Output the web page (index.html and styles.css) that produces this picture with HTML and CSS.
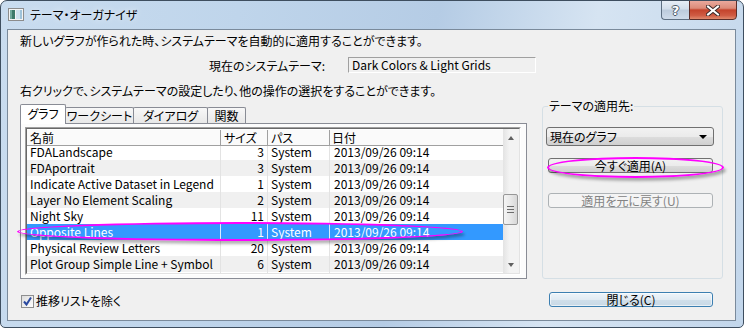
FILE: index.html
```html
<!DOCTYPE html>
<html lang="ja">
  <head>
    <meta charset="UTF-8" />
    <title>テーマ・オーガナイザ</title>
    <link rel="stylesheet" href="styles.css">
  </head>
  <body>
    <div class="window">
      <div class="titlebar">
        <svg class="app-icon" width="16" height="16" viewBox="0 0 16 16">
          <rect x="0.5" y="2.5" width="15" height="12" fill="#f4f4f4" stroke="#8c8c8c" />
          <rect x="2" y="4" width="5" height="9" fill="#3d7a6a" />
          <rect x="2" y="4" width="2" height="9" fill="#6fa89a" />
          <rect x="8" y="4" width="6" height="9" fill="#cfe2ee" />
          <rect x="12" y="4" width="2" height="9" fill="#9fc3da" />
        </svg>
        <span class="title">テーマ・オーガナイザ</span>
        <div class="caption-buttons">
          <div class="cap-btn help"><span>?</span></div>
          <div class="cap-btn close">
            <svg width="14" height="11" viewBox="0 0 14 11">
              <path d="M2 1.5 L12 9.5 M12 1.5 L2 9.5" stroke="#3b2a2a" stroke-width="4" stroke-linecap="square" />
              <path d="M2 1.5 L12 9.5 M12 1.5 L2 9.5" stroke="#fff" stroke-width="2" stroke-linecap="square" />
            </svg>
          </div>
        </div>
      </div>

      <div class="client">
        <p class="intro">新しいグラフが作られた時、システムテーマを自動的に適用することができます。</p>
        <div class="current-theme">
          <label>現在のシステムテーマ:</label>
          <div class="readonly-box">Dark Colors &amp; Light Grids</div>
        </div>
        <p class="hint">右クリックで、システムテーマの設定したり、他の操作の選択をすることができます。</p>

        <div class="main">
          <div class="tab-control">
            <div class="tabs">
              <div class="tab active" style="width: 46px;">グラフ</div>
              <div class="tab" style="width: 69px;">ワークシート</div>
              <div class="tab" style="width: 75px;">ダイアログ</div>
              <div class="tab" style="width: 39px;">関数</div>
            </div>
            <div class="tab-page">
              <div class="listview">
                <div class="list-inner">
                  <div class="list-main">
                    <div class="list-header">
                      <span class="c-name">名前</span>
                      <span class="c-size">サイズ</span>
                      <span class="c-path">パス</span>
                      <span class="c-date">日付</span>
                    </div>
                    <div class="list-body">
                      <div class="row"><span class="c-name">FDALandscape</span><span class="c-size">3</span><span class="c-path">System</span><span class="c-date">2013/09/26 09:14</span></div>
                      <div class="row"><span class="c-name">FDAportrait</span><span class="c-size">3</span><span class="c-path">System</span><span class="c-date">2013/09/26 09:14</span></div>
                      <div class="row"><span class="c-name">Indicate Active Dataset in Legend</span><span class="c-size">1</span><span class="c-path">System</span><span class="c-date">2013/09/26 09:14</span></div>
                      <div class="row"><span class="c-name">Layer No Element Scaling</span><span class="c-size">2</span><span class="c-path">System</span><span class="c-date">2013/09/26 09:14</span></div>
                      <div class="row"><span class="c-name">Night Sky</span><span class="c-size">11</span><span class="c-path">System</span><span class="c-date">2013/09/26 09:14</span></div>
                      <div class="row selected"><span class="c-name">Opposite Lines</span><span class="c-size">1</span><span class="c-path">System</span><span class="c-date">2013/09/26 09:14</span></div>
                      <div class="row"><span class="c-name">Physical Review Letters</span><span class="c-size">20</span><span class="c-path">System</span><span class="c-date">2013/09/26 09:14</span></div>
                      <div class="row"><span class="c-name">Plot Group Simple Line + Symbol</span><span class="c-size">6</span><span class="c-path">System</span><span class="c-date">2013/09/26 09:14</span></div>
                      <div class="row"><span class="c-name">Plot Group Simple Bar</span><span class="c-size">5</span><span class="c-path">System</span><span class="c-date">2013/09/26 09:14</span></div>
                    </div>
                  </div>
                  <div class="scrollbar">
                    <div class="sb-btn"><span class="arrow-up"></span></div>
                    <div class="sb-track">
                      <div class="sb-thumb"><span></span><span></span><span></span></div>
                    </div>
                    <div class="sb-btn"><span class="arrow-down"></span></div>
                  </div>
                </div>
              </div>
            </div>
          </div>

          <fieldset class="apply-group">
            <legend>テーマの適用先:</legend>
            <div class="combo">現在のグラフ<span class="combo-arrow"></span></div>
            <button class="btn apply-now">今すぐ適用(A)</button>
            <button class="btn revert" disabled>適用を元に戻す(U)</button>
          </fieldset>
        </div>

        <div class="footer">
          <label class="check">
            <span class="box">
              <svg width="11" height="11" viewBox="0 0 11 11">
                <path d="M2 5.5 L4.5 8.5 L9 1.5" fill="none" stroke="#2b4aa0" stroke-width="2" />
              </svg>
            </span>
            推移リストを除く
          </label>
          <button class="btn default">閉じる(C)</button>
        </div>
      </div>

      <div class="mark mark-row"></div>
      <div class="mark mark-apply"></div>
    </div>
  </body>
</html>
```

FILE: styles.css
```css
* {
  box-sizing: border-box;
}

html,
body {
  margin: 0;
  padding: 0;
  background: #fff;
}

body {
  font-family: "Noto Sans CJK JP", sans-serif;
  font-size: 12px;
  color: #000;
  font-feature-settings: "palt";
}

p {
  margin: 0;
}

.window {
  position: relative;
  width: 744px;
  height: 328px;
  border: 1px solid #3e4e5f;
  border-radius: 7px 7px 5px 5px;
  overflow: hidden;
  background: linear-gradient(100deg, #c9dcef 0%, #bfd5eb 30%, #b5cce5 55%, #d6e4f2 75%, #c2d6eb 100%);
}

/* title bar */
.titlebar {
  display: flex;
  align-items: flex-start;
  height: 28px;
}

.app-icon {
  margin: 5px 0 0 7px;
}

.title {
  margin: 6px 0 0 6px;
  line-height: 16px;
  text-shadow: 0 0 6px rgba(255, 255, 255, 0.9);
}

.caption-buttons {
  display: flex;
  margin: -1px 6px 0 auto;
}

.cap-btn {
  height: 20px;
  display: flex;
  align-items: center;
  justify-content: center;
}

.help {
  width: 28px;
  border: 1px solid #5d6f81;
  border-right: none;
  border-radius: 0 0 0 4px;
  background: linear-gradient(#e6eef6, #d2deeb 45%, #bccbdc 50%, #cfdcea 100%);
}

.help span {
  font-family: "DejaVu Sans", sans-serif;
  font-weight: bold;
  font-size: 13px;
  color: #fff;
  text-shadow: 1px 0 0 #4b5a6a, -1px 0 0 #4b5a6a, 0 1px 0 #4b5a6a, 0 -1px 0 #4b5a6a;
}

.close {
  width: 48px;
  border: 1px solid #5a2e2a;
  border-radius: 0 0 4px 0;
  background: linear-gradient(#eaa99d, #dc8b79 40%, #c4432c 50%, #cf5b43 80%, #e08a6e 100%);
}

/* client area */
.client {
  height: 292px;
  margin: 0 7px 0 6px;
  border: 1px solid #7a8a9b;
  background: #f0f0f0;
}

.intro {
  margin: 4px 0 0 12px;
  line-height: 14px;
}

.current-theme {
  display: flex;
  align-items: center;
  height: 16px;
  margin-top: 9px;
}

.current-theme label {
  width: 317px;
  text-align: right;
}

.readonly-box {
  width: 188px;
  height: 16px;
  margin-left: 23px;
  padding-left: 3px;
  border: 1px solid;
  border-color: #a0a0a0 #fff #fff #a0a0a0;
  line-height: 14px;
}

.hint {
  margin: 11px 0 0 12px;
  line-height: 14px;
}

.main {
  display: flex;
  height: 175px;
  margin-top: 6px;
}

/* tabs */
.tab-control {
  display: flex;
  flex-direction: column;
  width: 507px;
  margin-left: 12px;
}

.tabs {
  position: relative;
  z-index: 1;
  display: flex;
  align-items: flex-end;
  height: 19px;
}

.tab {
  height: 16px;
  margin-left: -1px;
  border: 1px solid #898c95;
  border-bottom: none;
  border-radius: 2px 2px 0 0;
  background: linear-gradient(#f8f8f8, #e8e8e8);
  text-align: center;
  line-height: 15px;
}

.tab.active {
  position: relative;
  z-index: 2;
  height: 20px;
  margin-left: 0;
  margin-bottom: -1px;
  background: #fff;
  line-height: 17px;
}

.tab-page {
  flex: 1;
  padding: 3px 5px 3px 4px;
  border: 1px solid #898c95;
  background: #fcfcfc;
}

/* list view */
.listview {
  height: 148px;
  border: 1px solid;
  border-color: #a0a0a0 #fff #fff #a0a0a0;
}

.list-inner {
  display: flex;
  height: 100%;
  border: 1px solid;
  border-color: #696969 #e3e3e3 #e3e3e3 #696969;
  background: #fff;
}

.list-main {
  flex: 1;
  display: flex;
  flex-direction: column;
  overflow: hidden;
}

.list-header {
  display: flex;
  height: 17px;
  line-height: 15px;
  background: #fafafa;
  border-top: 1px solid #fff;
  border-bottom: 1px solid #a0a0a0;
}

.list-header span {
  border-right: 1px solid #a0a0a0;
}

.c-name {
  width: 194px;
  padding-left: 3px;
}

.c-size {
  width: 47px;
  padding-left: 3px;
}

.c-path {
  width: 62px;
  padding-left: 3px;
}

.c-date {
  flex: 1;
  padding-left: 4px;
}

.list-header .c-date {
  border-right: none;
  padding-left: 2px;
}

.list-body {
  flex: 1;
  overflow: hidden;
}

.row {
  display: flex;
  height: 16px;
  line-height: 16px;
  white-space: nowrap;
}

/* first row is scrolled partly under the header */
.list-body .row:first-child {
  height: 14px;
  line-height: 12px;
}

.row:nth-child(even) {
  background: #f0f0f0;
}

.row span {
  border-right: 1px solid #e3e3e3;
}

.row .c-date {
  border-right: none;
}

.row .c-size {
  text-align: right;
  padding: 0 3px 0 0;
}

.row.selected {
  background: #3399ff;
  color: #fff;
}

.row.selected span {
  border-right-color: #d8ebff;
}

.row.selected .c-date {
  border-right: none;
}

/* scrollbar */
.scrollbar {
  display: flex;
  flex-direction: column;
  width: 16px;
  background: linear-gradient(to right, #e3e3e3, #f3f3f3 40%, #f3f3f3);
}

.sb-btn {
  display: flex;
  align-items: center;
  justify-content: center;
  height: 17px;
}

.arrow-up {
  border: 3px solid transparent;
  border-bottom: 4px solid #606060;
  border-top: none;
}

.arrow-down {
  border: 3px solid transparent;
  border-top: 4px solid #606060;
  border-bottom: none;
}

.sb-track {
  flex: 1;
  padding-top: 48px;
}

.sb-thumb {
  display: flex;
  flex-direction: column;
  align-items: center;
  justify-content: center;
  gap: 2px;
  width: 15px;
  height: 31px;
  border: 1px solid #979797;
  border-radius: 2px;
  background: linear-gradient(to right, #f4f4f4, #e8e8e8 50%, #d8d8d8);
}

.sb-thumb span {
  width: 7px;
  height: 1px;
  background: #6b6b6b;
}

/* group box */
.apply-group {
  width: 181px;
  margin: -5px 0 0 15px;
  padding: 0 0 0 3px;
  border: 1px solid #d5dfe5;
  border-radius: 3px;
}

.apply-group legend {
  margin-left: 2px;
  padding: 0 1px;
  line-height: 14px;
}

.combo {
  position: relative;
  width: 168px;
  height: 19px;
  margin-top: 14px;
  padding-left: 3px;
  border: 1px solid #707070;
  border-radius: 3px;
  background: linear-gradient(#f2f2f2, #ebebeb 50%, #dddddd 51%, #cfcfcf);
  line-height: 17px;
}

.combo-arrow {
  position: absolute;
  right: 6px;
  top: 7px;
  border: 4px solid transparent;
  border-top: 4px solid #000;
  border-bottom: none;
}

.btn {
  display: block;
  width: 165px;
  height: 15px;
  margin-left: 2px;
  padding: 0;
  border: 1px solid #707070;
  border-radius: 3px;
  background: linear-gradient(#f2f2f2, #ebebeb 50%, #dddddd 51%, #cfcfcf);
  font: inherit;
  line-height: 13px;
  color: #000;
}

.apply-now {
  margin-top: 12px;
}

.revert {
  margin-top: 20px;
}

.btn:disabled {
  border-color: #adb2b5;
  background: #f4f4f4;
  color: #838383;
}

/* footer */
.footer {
  display: flex;
  align-items: flex-start;
  margin-top: 13px;
}

.check {
  display: flex;
  align-items: center;
  gap: 2px;
  margin: 2px 0 0 13px;
  line-height: 14px;
}

.box {
  display: flex;
  align-items: center;
  justify-content: center;
  width: 13px;
  height: 13px;
  border: 1px solid #8e8f8f;
  background: linear-gradient(135deg, #dcdcdc, #fff);
}

.btn.default {
  width: 164px;
  margin: 0 22px 0 auto;
  border-color: #3c7fb1;
  background: linear-gradient(#eef5fa, #e1ebf3 50%, #d1dfea 51%, #c8d9e6);
  box-shadow: inset 0 0 0 1px rgba(255, 255, 255, 0.6);
}

/* highlight marks drawn over the dialog */
.mark {
  position: absolute;
  border: 2px solid #f0f;
  border-radius: 50%;
  box-shadow: 2px 3px 3px rgba(0, 0, 0, 0.3);
  pointer-events: none;
}

.mark-row {
  left: 16px;
  top: 221px;
  width: 446px;
  height: 19px;
}

.mark-apply {
  left: 546px;
  top: 156px;
  width: 177px;
  height: 21px;
}
```
